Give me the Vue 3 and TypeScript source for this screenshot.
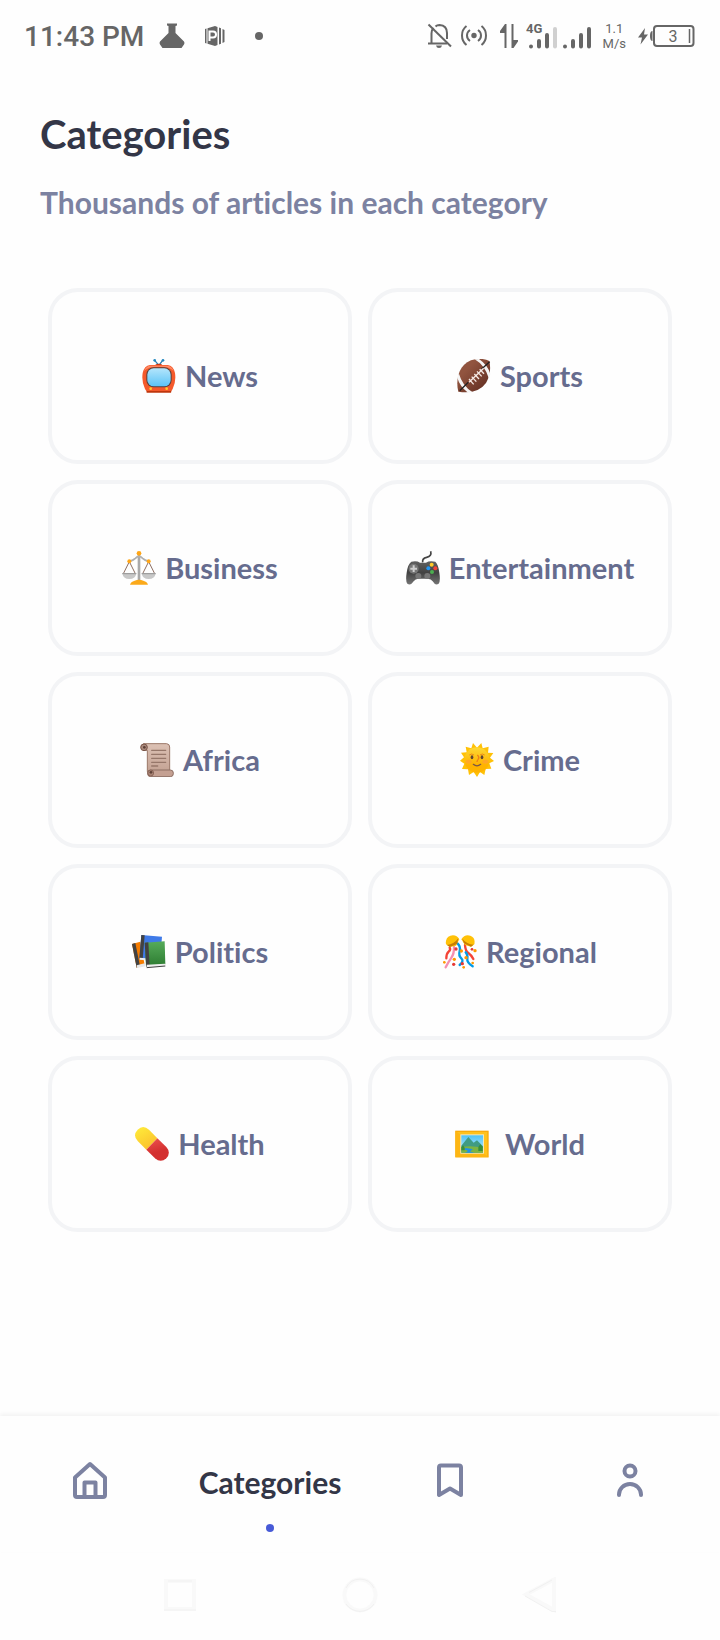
<script setup lang="ts">
import { ref } from 'vue'

interface Category {
  id: string
  label: string
  wide?: boolean
}

const categories: Category[] = [
  { id: 'news', label: 'News' },
  { id: 'sports', label: 'Sports' },
  { id: 'business', label: 'Business' },
  { id: 'entertainment', label: 'Entertainment' },
  { id: 'africa', label: 'Africa' },
  { id: 'crime', label: 'Crime' },
  { id: 'politics', label: 'Politics' },
  { id: 'regional', label: 'Regional' },
  { id: 'health', label: 'Health' },
  { id: 'world', label: 'World', wide: true },
]

const selected = ref<string | null>(null)
</script>

<template>
  <div class="screen">
    <header class="status">
      <div class="status-left">
        <span class="clock">11:43 PM</span>
        <svg class="flask" width="26" height="26" viewBox="0 0 26 26" aria-hidden="true">
          <path d="M8 0.500H18V2.500L16.500 3V10L25 18.500Q26 20 25 21.500L22.500 25H3.500L1 21.500Q0 20 1 18.500L9.500 10V3L8 2.500Z" fill="#666" />
        </svg>
        <svg class="app" width="20" height="20" viewBox="0 0 20 20" aria-hidden="true">
          <path d="M0 3L1.500 2.500V17.500L0 17ZM2.500 2.300L10 0L12.500 1V19L10 20L2.500 17.700ZM14 1.500L16 2.300V17.700L14 18.500ZM17.500 3L19.500 4V16L17.500 17Z" fill="#666" />
          <path d="M4.500 15V5.500H8A3 3 0 0 1 8 11.500H4.500" fill="none" stroke="#fff" stroke-width="2" />
        </svg>
        <span class="more"></span>
      </div>
      <div class="status-right">
        <svg width="26" height="26" viewBox="0 0 26 26" aria-hidden="true">
          <g fill="none" stroke="#666" stroke-width="2">
            <path d="M4.500 20V10.500Q4.500 7 6.500 5M8.500 3.500Q10 2 12.500 2Q20 2.500 20 10V16M1 20.500H20" />
            <path d="M1.500 1.500L24 23.500" />
          </g>
          <path d="M9 22.500H15Q14.500 25 12 25Q9.500 25 9 22.500Z" fill="#666" />
        </svg>
        <svg class="hotspot" width="26" height="22" viewBox="0 0 26 22" aria-hidden="true">
          <circle cx="13" cy="10.500" r="2.700" fill="#666" />
          <path d="M5.500 1Q1 4.500 1 10.500T5.500 20M20.500 1Q25 4.500 25 10.500T20.500 20M9 5Q6 7 6 10.500T9 16M17 5Q20 7 20 10.500T17 16" fill="none" stroke="#666" stroke-width="2" />
        </svg>
        <svg class="data" width="18" height="24" viewBox="0 0 18 24" aria-hidden="true">
          <path d="M5 0H6.500V24H4.500V9H0V7ZM11.500 0H13.500V16H18V17.500L13.500 24H11.500Z" fill="#666" />
        </svg>
        <svg class="signal" width="66" height="30" viewBox="0 0 66 30" role="img" aria-label="4G signal">
          <text x="0" y="12" class="network">4G</text>
          <g stroke="#666" stroke-width="4" stroke-linecap="round">
            <path d="M5 25.500V25.400M13 25.500V20M21 25.500V14M39 25.500V25.400M47 25.500V20M55 25.500V14M63 25.500V8" />
            <path d="M29 25.500V8" stroke="#d0d0d0" />
          </g>
        </svg>
        <span class="speed"><span>1.1</span><span>M/s</span></span>
        <svg class="battery" width="57" height="22" viewBox="0 0 57 22" role="img" aria-label="Battery 3 percent, charging">
          <path d="M7 3L0 12.500H4L2.500 19.500L10 9.500H6Z" fill="#666" />
          <path d="M14.500 6Q12 6 12 11T14.500 16Z" fill="#666" />
          <rect x="16" y="1" width="39.500" height="20" rx="3" fill="none" stroke="#666" stroke-width="2" />
          <path d="M51.500 4V18" stroke="#666" stroke-width="1.500" />
          <text x="35" y="17" text-anchor="middle" class="level">3</text>
        </svg>
      </div>
    </header>

    <main class="content">
      <h1>Categories</h1>
      <p class="lead">Thousands of articles in each category</p>

      <div class="grid">
        <button
          v-for="c in categories"
          :key="c.id"
          type="button"
          class="card"
          :class="{ wide: c.wide }"
          @click="selected = c.id"
        >
          <svg class="emoji" viewBox="0 0 102 102" aria-hidden="true">
            <!-- television -->
            <g v-if="c.id === 'news'">
              <path d="M38 4L48 16M62 4L53 16" stroke="#2d7fb0" stroke-width="4" />
              <circle cx="38" cy="4" r="4" fill="#2489c0" />
              <circle cx="63" cy="4" r="4" fill="#2489c0" />
              <path d="M38 20Q40 14 50 14T63 20Z" fill="#c33a15" />
              <path d="M12 88H90L87 101H14Z" fill="#bf360c" />
              <path d="M24 18H77Q94 20 99 42Q103 68 92 90Q90 96 84 96H17Q11 96 9 90Q-2 68 2 42Q7 20 24 18Z" fill="#f4592b" />
              <path d="M24 20H77Q90 22 95 36Q84 23 50 23T6 36Q11 22 24 20Z" fill="#ff8a65" />
              <rect x="13" y="25" width="76" height="60" rx="22" fill="#5b4038" />
              <rect x="16" y="28" width="70" height="54" rx="19" fill="url(#tvScreen)" />
              <circle cx="26" cy="89" r="4" fill="#ffca28" />
              <circle cx="74" cy="89" r="4" fill="#ffca28" />
            </g>
            <!-- football -->
            <g v-else-if="c.id === 'sports'">
              <path d="M4 98C-6 58 8 8 55 1Q82 -3 97 6Q105 40 87 72Q62 107 4 98Z" fill="url(#ball)" />
              <path d="M1 56Q8 82 33 101L46 99Q17 82 5 42ZM100 45Q92 18 66 0L53 1Q83 18 96 59Z" fill="#f5f5f5" />
              <path d="M8 95L34 70M74 30L98 8" stroke="#222" stroke-width="4" />
              <path d="M36 70L80 28M36 60L50 76M44 53L58 68M52 45L66 60M60 37L74 52M68 31L81 44" stroke="#f5e9e4" stroke-width="4" />
            </g>
            <!-- scales -->
            <g v-else-if="c.id === 'business'">
              <path d="M22 32L4 68M22 32L40 68M80 32L62 68M80 32L98 68" stroke="#8d6e63" stroke-width="3" />
              <path d="M51 10V88" stroke="#a9a9a9" stroke-width="8" />
              <path d="M22 31Q34 28 40 22Q51 10 62 22Q68 28 80 31" fill="none" stroke="#b0b0b0" stroke-width="5" />
              <path d="M1 66H43Q41 84 22 84T1 66ZM59 66H101Q99 84 80 84T59 66Z" fill="#c8c8c8" />
              <path d="M1 66H43V70H1ZM59 66H101V70H59Z" fill="#9e9e9e" />
              <circle cx="51" cy="7" r="7" fill="#ffa617" />
              <circle cx="22" cy="31" r="6" fill="#ffa617" />
              <circle cx="80" cy="31" r="6" fill="#ffa617" />
              <path d="M24 101Q26 92 38 89Q51 84 64 89Q76 92 78 101Z" fill="#fba91a" />
            </g>
            <!-- game controller -->
            <g v-else-if="c.id === 'entertainment'">
              <path d="M50 34Q48 22 62 19Q78 16 74 1" fill="none" stroke="#444" stroke-width="5" />
              <path d="M16 32Q32 28 42 35H60Q70 28 88 32Q97 40 100 65Q104 90 98 98Q88 105 80 91Q75 83 66 83H37Q28 83 23 91Q14 105 4 98Q-2 90 2 65Q5 40 16 32Z" fill="url(#pad)" />
              <circle cx="23" cy="53" r="15" fill="#777" />
              <path d="M23 43V63M13 53H33" stroke="#cfcfcf" stroke-width="6" />
              <circle cx="37" cy="75" r="9" fill="#777" />
              <circle cx="64" cy="75" r="9" fill="#777" />
              <circle cx="77" cy="41" r="6" fill="#ffca28" />
              <circle cx="67" cy="52" r="6" fill="#2196f3" />
              <circle cx="88" cy="52" r="6" fill="#f44336" />
              <circle cx="78" cy="63" r="6" fill="#4caf50" />
            </g>
            <!-- scroll -->
            <g v-else-if="c.id === 'africa'">
              <path d="M10 2H80Q89 3 89 12V86H22V22H10Z" fill="url(#paper)" stroke="#9b7768" stroke-width="3" />
              <circle cx="12" cy="13" r="10" fill="#a9897c" stroke="#795548" stroke-width="3" />
              <circle cx="13" cy="13" r="4" fill="#5d4037" />
              <rect x="23" y="81" width="77" height="20" rx="9" fill="#c4a092" stroke="#8d6e63" stroke-width="3" />
              <circle cx="32" cy="90" r="9" fill="#a98475" stroke="#795548" stroke-width="2" />
              <circle cx="33" cy="88" r="4" fill="#5d4037" />
              <path d="M35 22H77M35 34H77M35 46H77M35 58H77M35 69H53" stroke="#96776a" stroke-width="4" stroke-linecap="round" />
            </g>
            <!-- sun with face -->
            <g v-else-if="c.id === 'crime'">
              <path d="M51 14L64 0L68 16L86 11L84 29L100 30L90 44L102 54L88 61L94 77L77 78L73 96L60 87L51 102L41 87L27 96L24 79L6 78L13 62L0 53L12 43L3 29L20 28L17 11L34 16L39 0Z" fill="#ffc107" />
              <circle cx="51" cy="51" r="38" fill="url(#sun)" />
              <ellipse cx="26" cy="56" rx="9" ry="6" fill="#ffa726" />
              <ellipse cx="76" cy="56" rx="9" ry="6" fill="#ffa726" />
              <ellipse cx="36" cy="43" rx="4" ry="6" fill="#634432" />
              <ellipse cx="66" cy="43" rx="4" ry="6" fill="#634432" />
              <path d="M28 36Q35 30 42 36M60 36Q67 30 74 36" fill="none" stroke="#ed8b18" stroke-width="3" />
              <path d="M52 36Q59 42 55 48T51 57" fill="none" stroke="#ef7f18" stroke-width="4" />
              <path d="M40 64Q51 73 62 64" fill="none" stroke="#795548" stroke-width="4" stroke-linecap="round" />
            </g>
            <!-- books -->
            <g v-else-if="c.id === 'politics'">
              <path d="M0 27L25 20L38 89L14 98Z" fill="#f57c00" />
              <path d="M0 27L10 24L24 94L14 98Z" fill="#424242" />
              <path d="M14 91L38 85L41 94L15 99Z" fill="#e8e8e8" />
              <path d="M28 0L90 5L84 76L22 72Z" fill="#3f7ae8" />
              <path d="M28 0L38 1L32 73L22 70Z" fill="#424242" />
              <path d="M23 68L42 70V76L23 74Z" fill="#eeeeee" />
              <path d="M38 23L98 19L100 88L42 92Z" fill="url(#book)" />
              <path d="M38 23L49 22L53 92L43 96Z" fill="#424242" />
              <path d="M44 89L99 86V94L45 98Z" fill="#eeeeee" />
              <path d="M44 98L100 93" stroke="#424242" stroke-width="3" />
            </g>
            <!-- confetti balls -->
            <g v-else-if="c.id === 'regional'">
              <g fill="none" stroke-width="7" stroke-linecap="round">
                <path d="M20 38Q24 44 17 50T10 70" stroke="#f44336" />
                <path d="M33 36Q34 56 24 70T8 97" stroke="#f48fb1" />
                <path d="M42 24Q54 34 50 48T55 70T50 90" stroke="#039be5" />
                <path d="M66 30Q67 48 76 54T91 72" stroke="#f44336" />
                <path d="M68 52Q75 60 73 71T89 94" stroke="#039be5" />
              </g>
              <path d="M9 28Q6 8 22 2Q40 -3 49 13L39 32L21 36Z" fill="#ffc107" />
              <path d="M12 30Q33 28 46 10L42 27L20 36Z" fill="#c77d04" />
              <path d="M94 28Q98 8 82 2Q65 -3 55 13L66 30L84 35Z" fill="#ffc107" />
              <path d="M92 29Q71 28 58 11L63 25L84 35Z" fill="#c77d04" />
              <g fill="#ff9800">
                <circle cx="4" cy="82" r="4" /><circle cx="34" cy="73" r="5" /><circle cx="55" cy="48" r="5" /><circle cx="69" cy="68" r="5" /><circle cx="96" cy="47" r="5" /><circle cx="89" cy="84" r="4" /><circle cx="62" cy="97" r="4" />
              </g>
              <g fill="#e53935">
                <circle cx="39" cy="42" r="5" /><circle cx="32" cy="88" r="5" /><circle cx="58" cy="86" r="5" /><circle cx="87" cy="43" r="4" />
              </g>
            </g>
            <!-- pill -->
            <g v-else-if="c.id === 'health'">
              <path d="M8 8Q24 -8 42 8L67 34L34 68L8 42Q-8 25 8 8Z" fill="url(#pillTop)" />
              <path d="M67 34L94 60Q109 77 94 94Q77 109 60 94L34 68Z" fill="url(#pillBottom)" />
            </g>
            <!-- framed picture -->
            <g v-else>
              <rect x="1" y="11" width="100" height="80" fill="#f9ab0b" />
              <rect x="5" y="15" width="92" height="72" fill="#ffc21d" />
              <path d="M1 11L17 23V79L1 91ZM17 79H86L101 91H1Z" fill="#fdb614" />
              <rect x="16" y="22" width="71" height="58" fill="#eee7c3" />
              <rect x="19" y="25" width="65" height="52" fill="url(#sky)" />
              <path d="M19 56L40 30L56 47L66 40L84 58V77H19Z" fill="#3f9b83" />
              <path d="M19 60Q48 54 84 62V77H19Z" fill="#7cb342" />
              <path d="M29 63Q62 66 50 70T58 77H30Q47 71 29 68Z" fill="#1e90e8" />
              <path d="M70 60L76 52L83 60V72H70ZM19 61L24 55L29 62V70H19Z" fill="#388e3c" />
            </g>
          </svg>
          <span>{{ c.label }}</span>
        </button>
      </div>
    </main>

    <nav class="tabs" aria-label="Main">
      <a href="#home" class="tab" aria-label="Home">
        <svg width="36" height="40" viewBox="0 0 36 40" aria-hidden="true">
          <g class="stroke">
            <path d="M3 17.500L18 4L33 17.500V35Q33 37 31 37H5Q3 37 3 35Z" />
            <path d="M12.500 36V22.500H23.500V36" />
          </g>
        </svg>
      </a>
      <a href="#categories" class="tab active" aria-current="page">
        <span>Categories</span>
        <span class="dot"></span>
      </a>
      <a href="#bookmarks" class="tab" aria-label="Bookmarks">
        <svg width="36" height="40" viewBox="0 0 36 40" aria-hidden="true">
          <path class="stroke" d="M7 35V7.500Q7 5.500 9 5.500H27Q29 5.500 29 7.500V35L18 28.500Z" />
        </svg>
      </a>
      <a href="#profile" class="tab" aria-label="Profile">
        <svg width="36" height="40" viewBox="0 0 36 40" aria-hidden="true">
          <circle class="stroke" cx="18" cy="11" r="5.500" />
          <path class="stroke" d="M7 35V34.500A11 10.500 0 0 1 29 34.500V35" />
        </svg>
      </a>
    </nav>

    <div class="system">
      <button type="button" aria-label="Recent apps">
        <svg width="36" height="36" viewBox="0 0 36 36" aria-hidden="true">
          <rect x="4" y="4" width="28" height="28" class="halo" />
          <path d="M6 4H30M2 33H34" class="edge" />
        </svg>
      </button>
      <button type="button" aria-label="Home screen">
        <svg width="36" height="36" viewBox="0 0 36 36" aria-hidden="true">
          <circle cx="18" cy="18" r="15.500" class="halo" />
          <path d="M4 11A15.500 15.500 0 0 1 32 11M4 27A17 17 0 0 0 32 27" class="edge" />
        </svg>
      </button>
      <button type="button" aria-label="Back">
        <svg width="36" height="36" viewBox="0 0 36 36" aria-hidden="true">
          <path d="M32 2.500V33L4 17.500Z" class="halo" />
          <path d="M7 15.500L30 3M3 19L30 34.500H34" class="edge" />
        </svg>
      </button>
    </div>

    <svg class="defs" width="0" height="0" aria-hidden="true">
      <defs>
        <linearGradient id="tvScreen" x1="0" y1="0" x2="0" y2="1"><stop offset="0" stop-color="#b3e5fc" /><stop offset="1" stop-color="#5cc4f6" /></linearGradient>
        <linearGradient id="ball" x1="0" y1="0" x2="1" y2="1"><stop offset="0.300" stop-color="#91543f" /><stop offset="0.800" stop-color="#6b3527" /></linearGradient>
        <linearGradient id="pad" x1="0" y1="0" x2="0" y2="1"><stop offset="0" stop-color="#616161" /><stop offset="0.500" stop-color="#424242" /><stop offset="1" stop-color="#757575" /></linearGradient>
        <linearGradient id="paper" x1="0" y1="0" x2="0" y2="1"><stop offset="0" stop-color="#dcc1b4" /><stop offset="1" stop-color="#c4a394" /></linearGradient>
        <linearGradient id="sun" x1="0" y1="0" x2="0" y2="1"><stop offset="0" stop-color="#fdd835" /><stop offset="0.700" stop-color="#ffb300" /></linearGradient>
        <linearGradient id="book" x1="0" y1="0" x2="0" y2="1"><stop offset="0" stop-color="#56ab5a" /><stop offset="1" stop-color="#2e7d32" /></linearGradient>
        <linearGradient id="pillTop" x1="0" y1="0" x2="0.600" y2="1"><stop offset="0" stop-color="#ffee3b" /><stop offset="1" stop-color="#fbc02d" /></linearGradient>
        <linearGradient id="pillBottom" x1="0" y1="0" x2="0.300" y2="1"><stop offset="0" stop-color="#ef5350" /><stop offset="0.700" stop-color="#d32f2f" /></linearGradient>
        <linearGradient id="sky" x1="0" y1="0" x2="0" y2="1"><stop offset="0" stop-color="#4fc3f7" /><stop offset="1" stop-color="#c5ecfb" /></linearGradient>
      </defs>
    </svg>
  </div>
</template>

<style>
body {
  margin: 0;
  background: #fefefe;
}
</style>

<style scoped>
.screen {
  min-height: 100vh;
  display: flex;
  flex-direction: column;
  background: #fefefe;
  color: #333647;
  font-family: Lato, "Open Sans", sans-serif;
  font-variant-ligatures: none;
}

button {
  border: 0;
  padding: 0;
  margin: 0;
  background: none;
  font: inherit;
  font-variant-ligatures: none;
  color: inherit;
  cursor: pointer;
}

.status {
  height: 72px;
  padding: 0 25px 0 24px;
  display: flex;
  justify-content: space-between;
  align-items: center;
  color: #666;
  font-family: Roboto, sans-serif;
}

.status-left,
.status-right {
  display: flex;
  align-items: center;
}

.clock {
  font-size: 28px;
  line-height: 32px;
  font-weight: 500;
  padding-top: 2px;
}

.flask {
  margin-left: 15px;
}

.app {
  margin-left: 20px;
}

.more {
  width: 8px;
  height: 8px;
  margin-left: 30px;
  border-radius: 50%;
  background: #666;
}

.hotspot {
  margin-left: 8px;
}

.data {
  margin-left: 13px;
}

.signal {
  margin-left: 8px;
}

.network {
  font: 700 13px Roboto, sans-serif;
  fill: #666;
}

.speed {
  margin-left: 11px;
  display: flex;
  flex-direction: column;
  align-items: center;
  font-size: 13px;
  line-height: 15px;
}

.battery {
  margin-left: 12px;
}

.level {
  font: 400 16px Roboto, sans-serif;
  fill: #666;
}

.content {
  flex: 1;
  padding: 38px 40px 40px;
}

h1 {
  margin: 0;
  font-size: 40px;
  line-height: 48px;
  font-weight: 700;
}

.lead {
  margin: 26px 0 0;
  font-size: 30px;
  line-height: 36px;
  font-weight: 700;
  color: #7c82a1;
}

.grid {
  margin: 68px 8px 0;
  display: grid;
  grid-template-columns: 1fr 1fr;
  gap: 16px;
}

.card {
  height: 176px;
  display: flex;
  align-items: center;
  justify-content: center;
  gap: 9px;
  border: 4px solid #f3f4f6;
  border-radius: 30px;
  font-size: 29px;
  line-height: 36px;
  font-weight: 700;
  color: #666c8e;
}

.card.wide {
  gap: 16px;
}

.emoji {
  width: 34px;
  height: 34px;
}

.tabs {
  height: 136px;
  display: grid;
  grid-template-columns: repeat(4, 1fr);
  background: #fefefe;
  box-shadow: 0 -2px 4px rgba(0, 0, 0, 0.05);
}

.tab {
  position: relative;
  height: 128px;
  display: flex;
  align-items: center;
  justify-content: center;
  color: #7c82a1;
  text-decoration: none;
}

.active {
  color: #333647;
  font-size: 30px;
  line-height: 40px;
  font-weight: 700;
}

.active span:first-child {
  padding-top: 4px;
}

.dot {
  position: absolute;
  bottom: 12px;
  width: 8px;
  height: 8px;
  border-radius: 50%;
  background: #475ad7;
}

.stroke {
  fill: none;
  stroke: currentColor;
  stroke-width: 4;
  stroke-linecap: round;
  stroke-linejoin: round;
}

.system {
  height: 88px;
  padding: 0 90px 2px;
  box-sizing: border-box;
  display: grid;
  grid-template-columns: repeat(3, 1fr);
}

.system button {
  display: flex;
  align-items: center;
  justify-content: center;
}

.halo {
  fill: none;
  stroke: #f9f9f9;
  stroke-width: 4;
}

.edge {
  fill: none;
  stroke: #f1f1f1;
  stroke-width: 1;
}

.defs {
  position: absolute;
}
</style>
